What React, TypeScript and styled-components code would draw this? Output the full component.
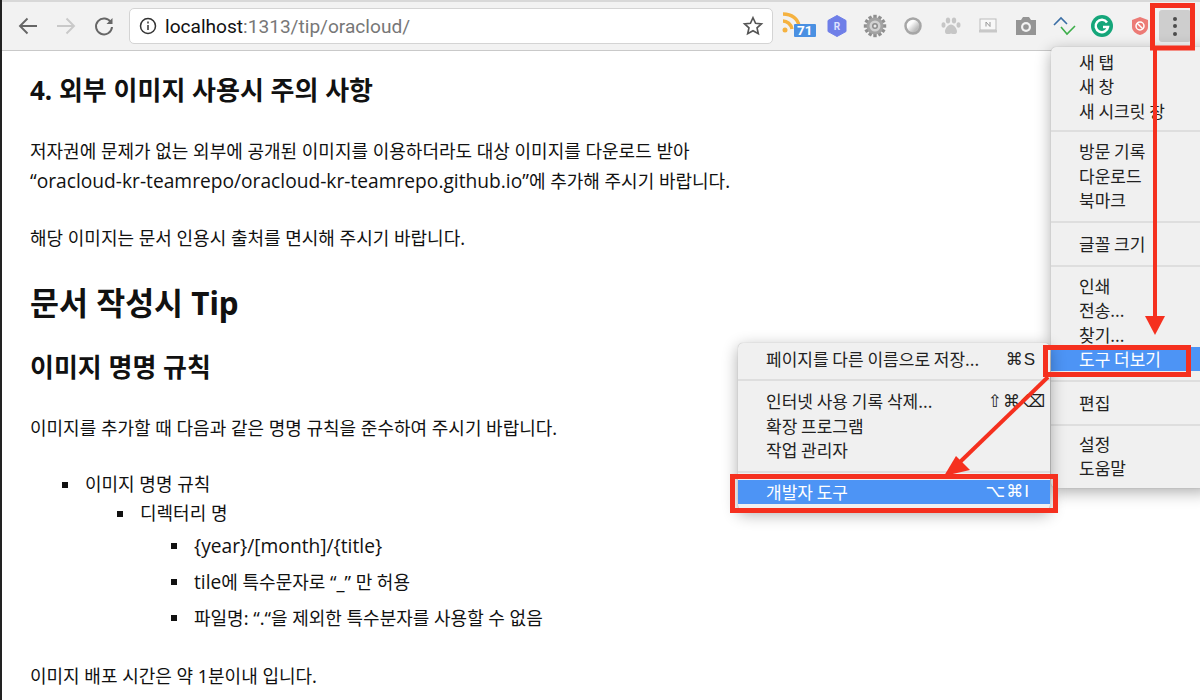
import React from "react";
import styled, { createGlobalStyle } from "styled-components";

const Global = createGlobalStyle`
  html, body { margin: 0; padding: 0; background: #fff; overflow: hidden; }
  body { font-family: "Noto Sans", "Noto Sans CJK KR", sans-serif; color: #111; }
`;
const Page = styled.div`
  position: relative; width: 1200px; height: 700px; overflow: hidden; background: #fff;
  border-left: 2px solid #222; box-sizing: border-box;
`;
const TopLine = styled.div`height: 2px; background: #d8d8d8;`;
const Toolbar = styled.div`
  height: 49px; box-sizing: border-box; background: #f2f2f2; border-bottom: 1px solid #c9c9c9;
  display: flex; align-items: center; padding: 0 0 0 7px;
`;
const NavBtn = styled.div<{ $flip?: boolean }>`
  width: 38px; display: flex; justify-content: center; align-items: center; height: 28px;
  ${(p) => (p.$flip ? "transform: scaleX(-1);" : "")}
`;
const Omni = styled.div`
  width: 644px; height: 36px; margin-left: 6px; box-sizing: border-box; background: #fff; border: 1px solid #d4d4d4; border-radius: 5px;
  display: flex; align-items: center; padding: 0 8px 0 9px; gap: 8px;
`;
const Url = styled.div`
  flex: 1; font: 19.1px "Roboto", sans-serif; color: #777;
  b { font-weight: 400; color: #111; }
`;
const Exts = styled.div`display: flex; align-items: center; margin-left: 7px;`;
const Ext = styled.div`width: 37.9px; height: 30px; display: flex; align-items: center; justify-content: center; position: relative;`;
const RssIcon = styled.svg`margin-left: -13px; margin-top: -6px;`;
const Badge = styled.span`
  position: absolute; left: 14px; top: 13px; background: #4a90e2; color: #fff; font: 700 13.5px "Roboto", sans-serif;
  border-radius: 1px; padding: 0 3px; line-height: 13px;
`;
const Kebab = styled.div`
  width: 32px; height: 32px; background: #cecece; border-radius: 3px;
  display: flex; flex-direction: column; align-items: center; justify-content: center; gap: 3.5px;
  i { width: 4px; height: 4px; border-radius: 50%; background: #4c4c4c; display: block; }
`;
const Content = styled.main`padding: 0 0 0 28px;`;
const H4 = styled.h4`font-size: 26px; font-weight: 700; line-height: 36px; margin: 21px 0 28px; color: #111;`;
const P = styled.p<{ $mb?: number }>`font-size: 18px; line-height: 30px; margin: 0 0 ${(p) => p.$mb ?? 27}px;`;
const Latin = styled.span`font-family: "Open Sans", "Noto Sans", sans-serif; font-size: 19.2px;`;
const H1 = styled.h1`font-size: 31.5px; font-weight: 700; line-height: 42px; margin: 0 0 25px;`;
const H2 = styled.h2`font-size: 26px; font-weight: 700; line-height: 36px; margin: 0 0 28px;`;
const L1 = styled.ul`list-style: none; margin: 0 0 25px; padding: 0 0 0 55px; font-size: 18px;`;
const L2 = styled.ul`list-style: none; margin: 0; padding: 0 0 0 55px;`;
const L3 = styled.ul`list-style: none; margin: 0 0 0 -1px; padding: 0 0 0 55px;`;
const Li = styled.li<{ $h?: number }>`
  position: relative; line-height: ${(p) => p.$h ?? 29}px;
  &::before { content: ""; position: absolute; left: -23px; top: ${(p) => ((p.$h ?? 29) - 6) / 2}px; width: 6px; height: 6px; background: #111; }
`;
const Menu = styled.div`
  position: absolute; background: #f0f0f0; border-radius: 5px; box-shadow: 0 4px 16px rgba(0,0,0,.33), 0 0 1px rgba(0,0,0,.3);
  font-size: 17px; font-family: "Noto Sans CJK KR", sans-serif; color: #222; box-sizing: border-box;
`;
const MainMenu = styled(Menu)`left: 1049px; top: 47px; width: 160px; height: 441px; padding-top: 3px;`;
const SubMenu = styled(Menu)`left: 736px; top: 343px; width: 312px; height: 167px; padding-top: 4px;`;
const Item = styled.div<{ $active?: boolean }>`
  height: 24.4px; line-height: 24px; padding: 0 14px 0 28px; display: flex; justify-content: space-between; white-space: nowrap;
  ${(p) => p.$active ? "background: #4d94f5; color: #fff;" : ""}
`;
const Shortcut = styled.span<{ $mr?: number }>`
  font: 17px "Liberation Sans", "DejaVu Sans", sans-serif; letter-spacing: 1px; display: flex; align-items: center;
  margin-right: ${(p) => p.$mr ?? 0}px;
`;
const Sep = styled.div<{ $m?: number; $b?: number }>`
  height: 2px; background: #dedede; margin: ${(p) => p.$m ?? 8}px 0 ${(p) => p.$b ?? p.$m ?? 8}px;
`;
const Overlay = styled.svg`position: absolute; left: -2px; top: 0; pointer-events: none;`;

const Back = ({ color }: { color: string }) => (
  <svg width="22" height="22" viewBox="0 0 22 22" fill="none" stroke={color} strokeWidth="1.9"><path d="M20 11H3M10.500 3.500 3 11l7.500 7.500" /></svg>
);

const gearTeeth = Array.from({ length: 12 }, (_, i) => i * 30);

export default function App() {
  return (
    <Page>
      <Global />
      <TopLine />
      <Toolbar>
        <NavBtn><Back color="#666" /></NavBtn>
        <NavBtn $flip><Back color="#c9c9c9" /></NavBtn>
        <NavBtn>
          <svg width="22" height="22" viewBox="0 0 22 22" fill="none" stroke="#666" strokeWidth="2"><path d="M18 7.500A8 8 0 1 0 19 12" /><path d="M19.500 3v6h-6z" fill="#666" stroke="none" /></svg>
        </NavBtn>
        <Omni>
          <svg width="18" height="18" viewBox="0 0 18 18" fill="none" stroke="#333" strokeWidth="1.500"><circle cx="9" cy="9" r="7.500" /><path d="M9 8v5" /><path d="M9 4.600v1.800" /></svg>
          <Url><b>localhost</b>:1313/tip/oracloud/</Url>
          <svg width="22" height="22" viewBox="0 0 24 24" fill="none" stroke="#555" strokeWidth="1.800"><path d="m12 3 2.800 6 6.400.7-4.800 4.300 1.400 6.400L12 17.100l-5.800 3.300 1.400-6.400L2.800 9.700 9.200 9z" /></svg>
        </Omni>
        <Exts>
          <Ext>
            <RssIcon width="20" height="24" viewBox="0 0 20 24" fill="none" stroke="#f5b240" strokeWidth="3.400"><path d="M1 3c9 0 15 5 16 12" /><path d="M1 10c4 0 8 3 9 8" /><circle cx="3" cy="19" r="2.500" fill="#f5b240" stroke="none" /></RssIcon>
            <Badge>71</Badge>
          </Ext>
          <Ext><svg width="22" height="24" viewBox="0 0 22 24"><path d="M11 1.500 20 6.500v11L11 22.500 2 17.500v-11z" fill="#6f7fe8" stroke="#6f7fe8" strokeLinejoin="round" /><text x="11" y="16" textAnchor="middle" fontSize="10" fontWeight="700" fill="#dfe3ff" fontFamily="Roboto">R</text></svg></Ext>
          <Ext>
            <svg width="24" height="24" viewBox="0 0 24 24">
              {gearTeeth.map((a) => <rect key={a} x="10.300" y="0.800" width="3.400" height="5" fill="#8f8f8f" transform={`rotate(${a} 12 12)`} />)}
              <circle cx="12" cy="12" r="8.500" fill="#a3a3a3" />
              <circle cx="12" cy="12" r="5.500" fill="#d2d2d2" />
              <circle cx="12" cy="12" r="3" fill="#8d8d8d" />
              <circle cx="12" cy="12" r="1.500" fill="#e8e8e8" />
            </svg>
          </Ext>
          <Ext>
            <svg width="22" height="22" viewBox="0 0 22 22">
              <defs><linearGradient id="ball" x1="0.150" y1="0.150" x2="0.850" y2="0.850"><stop offset="0.300" stopColor="#fbfbfb" /><stop offset="0.800" stopColor="#bdbdbd" /></linearGradient></defs>
              <circle cx="11" cy="11" r="7.500" fill="url(#ball)" stroke="#a6a6a6" strokeWidth="2.500" />
            </svg>
          </Ext>
          <Ext><svg width="22" height="22" viewBox="0 0 22 22" fill="#c6c6c6"><ellipse cx="3.500" cy="10" rx="2" ry="2.800" /><ellipse cx="8" cy="5.500" rx="2.200" ry="3" /><ellipse cx="14" cy="5.500" rx="2.200" ry="3" /><ellipse cx="18.500" cy="10" rx="2" ry="2.800" /><path d="M11 9.500c-3 0-6 4-6 7 0 3 3 3 6 2 3 1 6 1 6-2 0-3-3-7-6-7z" /></svg></Ext>
          <Ext><svg width="20" height="16" viewBox="0 0 20 16"><rect x="2" y="1" width="16" height="11" fill="#f8f8f8" stroke="#bbb" /><rect x="1" y="12" width="18" height="2.500" fill="#c8c8c8" /><path d="M8 4v4.500M12 4v4.500M8 4l4 4.500" stroke="#999" fill="none" /></svg></Ext>
          <Ext><svg width="22" height="20" viewBox="0 0 22 20"><path d="M1 4h5l2-3h6l2 3h5v15H1z" fill="#959595" /><circle cx="11" cy="11" r="5" fill="#f2f2f2" /><circle cx="11" cy="11" r="2.800" fill="#959595" /></svg></Ext>
          <Ext><svg width="24" height="20" viewBox="0 0 24 20" fill="none" strokeWidth="1.600"><path d="m2 9 7-7 6 6" stroke="#3a6ea5" /><path d="m9 11 6 7 8-8" stroke="#3dae4a" /></svg></Ext>
          <Ext><svg width="24" height="24" viewBox="0 0 24 24" fill="none"><circle cx="12" cy="12" r="11" fill="#15a67a" /><path d="M17 8.500A6.200 6.200 0 1 0 18 13h-5" stroke="#fff" strokeWidth="2.500" /></svg></Ext>
          <Ext><svg width="20" height="22" viewBox="0 0 20 22"><path d="M10 2 18 5v7c0 4-4 7-8 8-4-1-8-4-8-8V5z" fill="#ec7b76" /><circle cx="10" cy="11" r="4" fill="none" stroke="#fff" strokeWidth="1.500" /><path d="m7 8 6 6" stroke="#fff" strokeWidth="1.500" /></svg></Ext>
        </Exts>
        <Kebab><i /><i /><i /></Kebab>
      </Toolbar>
      <Content>
        <H4>4. 외부 이미지 사용시 주의 사항</H4>
        <P>저자권에 문제가 없는 외부에 공개된 이미지를 이용하더라도 대상 이미지를 다운로드 받아<br /><Latin>“oracloud-kr-teamrepo/oracloud-kr-teamrepo.github.io”</Latin>에 추가해 주시기 바랍니다.</P>
        <P $mb={29}>해당 이미지는 문서 인용시 출처를 면시해 주시기 바랍니다.</P>
        <H1>문서 작성시 Tip</H1>
        <H2>이미지 명명 규칙</H2>
        <P $mb={27}>이미지를 추가할 때 다음과 같은 명명 규칙을 준수하여 주시기 바랍니다.</P>
        <L1>
          <Li>이미지 명명 규칙
            <L2>
              <Li>디렉터리 명
                <L3>
                  <Li $h={36}><Latin>{"{year}/[month]/{title}"}</Latin></Li>
                  <Li $h={36}><Latin>tile</Latin>에 특수문자로 “_” 만 허용</Li>
                  <Li $h={36}>파일명: “.“을 제외한 특수분자를 사용할 수 없음</Li>
                </L3>
              </Li>
            </L2>
          </Li>
        </L1>
        <P>이미지 배포 시간은 약 1분이내 입니다.</P>
      </Content>
      <MainMenu>
        <Item>새 탭</Item><Item>새 창</Item><Item>새 시크릿 창</Item>
        <Sep $m={7} />
        <Item>방문 기록</Item><Item>다운로드</Item><Item>북마크</Item>
        <Sep $m={9} />
        <Item>글꼴 크기</Item>
        <Sep $m={8} $b={7} />
        <Item>인쇄</Item><Item>전송...</Item><Item>찾기...</Item><Item $active>도구 더보기</Item>
        <Sep $m={9} />
        <Item>편집</Item>
        <Sep $m={8} $b={6} />
        <Item>설정</Item><Item>도움말</Item>
      </MainMenu>
      <SubMenu>
        <Item>페이지를 다른 이름으로 저장...<Shortcut>⌘S</Shortcut></Item>
        <Sep />
        <Item>인터넷 사용 기록 삭제...<Shortcut $mr={-10}>⇧⌘⌫</Shortcut></Item>
        <Item>확장 프로그램</Item>
        <Item>작업 관리자</Item>
        <Sep $b={7} />
        <Item $active>개발자 도구<Shortcut $mr={6}>⌥⌘I</Shortcut></Item>
      </SubMenu>
      <Overlay width="1200" height="700" viewBox="0 0 1200 700" fill="none" stroke="#f5301f">
        <rect x="1152.500" y="5.500" width="40" height="42.500" strokeWidth="5" />
        <path d="M1155 48V320" strokeWidth="4" />
        <path d="M1145 316h20L1155 335z" fill="#f5301f" stroke="none" />
        <rect x="1045.500" y="347.500" width="143" height="27" strokeWidth="5" />
        <path d="M1048 377 960 462" strokeWidth="4" />
        <path d="M944 476l12-20 14 14z" fill="#f5301f" stroke="none" />
        <rect x="732.500" y="476.500" width="323" height="34" strokeWidth="5" />
      </Overlay>
    </Page>
  );
}
